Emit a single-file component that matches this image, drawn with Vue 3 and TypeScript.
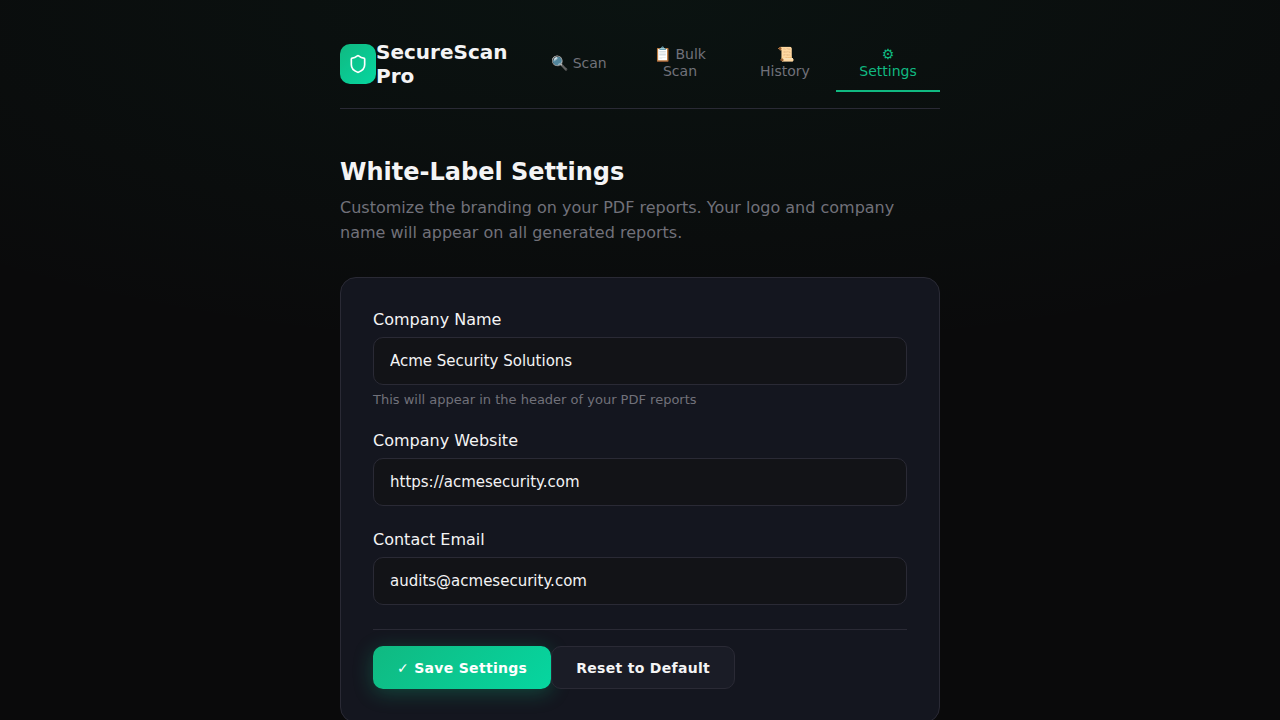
<script setup lang="ts">
interface Tab { icon: string; label: string; width: number; active?: boolean }
const tabs: Tab[] = [
  { icon: '🔍', label: 'Scan', width: 94 },
  { icon: '📋', label: 'Bulk Scan', width: 108 },
  { icon: '📜', label: 'History', width: 102 },
  { icon: '⚙', label: 'Settings', width: 104, active: true },
]
</script>

<template>
  <div class="page">
    <main class="wrap">
      <header class="header">
        <div class="brand">
          <div class="logo">
            <svg width="20" height="20" viewBox="0 0 24 24" fill="none" stroke="#fff" stroke-width="2" stroke-linecap="round" stroke-linejoin="round">
              <path d="M20 13c0 5-3.5 7.5-7.66 8.95a1 1 0 0 1-.67-.01C7.5 20.5 4 18 4 13V6a1 1 0 0 1 1-1c2 0 4.5-1.2 6.24-2.72a1.17 1.17 0 0 1 1.52 0C14.51 3.81 17 5 19 5a1 1 0 0 1 1 1z" />
            </svg>
          </div>
          <span class="brand-name">SecureScan Pro</span>
        </div>
        <nav class="tabs">
          <button v-for="t in tabs" :key="t.label" class="tab" :class="{ active: t.active }" :style="{ width: t.width + 'px' }">{{ t.icon }} {{ t.label }}</button>
        </nav>
      </header>

      <h1 class="title">White-Label Settings</h1>
      <p class="sub">Customize the branding on your PDF reports. Your logo and company name will appear on all generated reports.</p>

      <section class="card">
        <div class="field">
          <label class="label">Company Name</label>
          <input class="input" value="Acme Security Solutions" />
          <p class="hint">This will appear in the header of your PDF reports</p>
        </div>
        <div class="field">
          <label class="label">Company Website</label>
          <input class="input" value="https://acmesecurity.com" />
        </div>
        <div class="field">
          <label class="label">Contact Email</label>
          <input class="input" value="audits@acmesecurity.com" />
        </div>
        <div class="actions">
          <button class="btn primary">✓ Save Settings</button>
          <button class="btn secondary">Reset to Default</button>
        </div>
      </section>
    </main>
  </div>
</template>

<style>
html, body { background: #0a0a0b; }
</style>

<style scoped>
.page {
  min-height: 720px;
  box-sizing: border-box;
  font-family: "DejaVu Sans", sans-serif;
  color: #f4f4f5;
  background:
    radial-gradient(ellipse 80% 50% at 50% 0%, rgba(16, 185, 129, 0.05), transparent),
    #0a0a0b;
  padding-top: 36px;
}
.wrap { width: 600px; margin: 0 auto; }
.header {
  display: flex;
  align-items: center;
  gap: 24px;
  padding-bottom: 16px;
  border-bottom: 1px solid #2a2a35;
  margin-bottom: 48px;
}
.brand { display: flex; align-items: center; width: 168px; flex: none; }
.logo {
  width: 36px;
  height: 40px;
  flex: none;
  border-radius: 10px;
  background: linear-gradient(135deg, #10b981, #06d6a0);
  display: flex;
  align-items: center;
  justify-content: center;
}
.brand-name { font-size: 20px; font-weight: 700; line-height: 24px; color: #f4f4f5; }
.tabs { display: flex; }
.tab {
  box-sizing: border-box;
  background: none;
  border: none;
  border-bottom: 2px solid transparent;
  padding: 10px 16px;
  font-family: inherit;
  font-size: 14px;
  line-height: 17px;
  color: #71717a;
  text-align: center;
}
.tab.active { color: #10b981; border-bottom-color: #10b981; }
.title { margin: 0 0 8px; font-size: 24px; line-height: 30px; font-weight: 700; color: #f4f4f5; }
.sub { margin: 0 0 32px; font-size: 16px; line-height: 25px; color: #71717a; }
.card {
  box-sizing: border-box;
  background: #14161f;
  border: 1px solid #2a2a35;
  border-radius: 16px;
  padding: 32px;
  height: 446px;
}
.field { margin-bottom: 24px; }
.label { display: block; font-size: 16px; line-height: 19px; margin-bottom: 8px; color: #f4f4f5; }
.input {
  display: block;
  box-sizing: border-box;
  width: 100%;
  height: 48px;
  padding: 0 16px;
  background: #121317;
  border: 1px solid #2a2a35;
  border-radius: 10px;
  font-family: inherit;
  font-size: 15px;
  color: #f4f4f5;
  outline: none;
}
.hint { margin: 7px 0 0; font-size: 13px; line-height: 15px; color: #71717a; }
.actions { display: flex; border-top: 1px solid #2a2a35; padding-top: 16px; }
.btn {
  box-sizing: border-box;
  height: 43px;
  padding: 0 24px;
  border-radius: 10px;
  font-family: inherit;
  font-size: 14px;
  font-weight: 700;
  letter-spacing: 0.3px;
}
.primary {
  border: none;
  color: #fff;
  background: linear-gradient(135deg, #10b981, #06d6a0);
  box-shadow: 0 4px 20px rgba(16, 185, 129, 0.3);
}
.secondary { background: #1a1c26; border: 1px solid #2a2a35; color: #f4f4f5; }
</style>
